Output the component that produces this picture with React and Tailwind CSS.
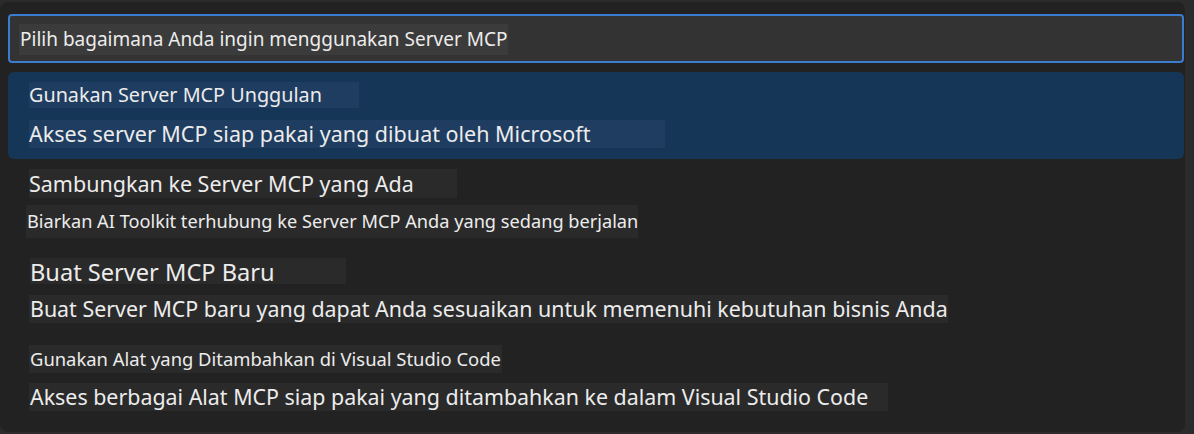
export default function App() {
  const font = { fontFamily: '"Noto Sans", "Open Sans", sans-serif' };
  return (
    <div className="w-[1194px] h-[434px] bg-[#2b2b2b] pt-[2px] pb-[2px] pr-[9px]" style={font}>
      <div className="w-[1185px] h-full bg-[#222222] rounded-[8px] pt-[12px] pl-[8px] pr-[1px] text-[#ececec]">
        <div className="h-[49px] border-2 border-[#3b7bd0] rounded-[4px] bg-[#333333] pl-[9px] pt-[8px]">
          <div className="w-[489px] h-[31px] bg-[#3b3b3b] flex items-center pl-[1px] text-[19px] leading-none whitespace-nowrap">
            Pilih bagaimana Anda ingin menggunakan Server MCP
          </div>
        </div>
        <div className="mt-[9px] h-[87px] rounded-[6px] bg-[#163657] pl-[21px] pt-[10px] flex flex-col">
          <div className="w-[330px] h-[26px] bg-[#1f3d60] flex items-center text-[19.8px] leading-none whitespace-nowrap">
            Gunakan Server MCP Unggulan
          </div>
          <div className="mt-[12px] w-[636px] h-[28px] bg-[#1f3d60] flex items-center text-[21.5px] leading-none whitespace-nowrap">
            Akses server MCP siap pakai yang dibuat oleh Microsoft
          </div>
        </div>
        <div className="flex flex-col items-start">
          <div className="mt-[10px] ml-[21px] w-[428px] h-[29px] bg-[#2a2a2a] flex items-center text-[21.5px] leading-none whitespace-nowrap">
            Sambungkan ke Server MCP yang Ada
          </div>
          <div className="mt-[7px] ml-[18px] w-[612px] h-[33px] bg-[#2a2a2a] flex items-center pl-[1px] text-[18.2px] leading-none whitespace-nowrap">
            Biarkan AI Toolkit terhubung ke Server MCP Anda yang sedang berjalan
          </div>
          <div className="mt-[20px] ml-[22px] w-[316px] h-[26px] bg-[#2a2a2a] flex items-center pt-[4px] text-[23.6px] leading-none whitespace-nowrap">
            Buat Server MCP Baru
          </div>
          <div className="mt-[11px] ml-[21px] w-[919px] h-[28px] bg-[#2a2a2a] flex items-center pl-[1px] text-[21.4px] leading-none whitespace-nowrap">
            Buat Server MCP baru yang dapat Anda sesuaikan untuk memenuhi kebutuhan bisnis Anda
          </div>
          <div className="mt-[22px] ml-[21px] w-[473px] h-[28px] bg-[#2a2a2a] flex items-center pl-[1px] text-[18.4px] leading-none whitespace-nowrap">
            Gunakan Alat yang Ditambahkan di Visual Studio Code
          </div>
          <div className="mt-[10px] ml-[21px] w-[859px] h-[28px] bg-[#2a2a2a] flex items-center pl-[1px] text-[21.4px] leading-none whitespace-nowrap">
            Akses berbagai Alat MCP siap pakai yang ditambahkan ke dalam Visual Studio Code
          </div>
        </div>
      </div>
    </div>
  );
}
